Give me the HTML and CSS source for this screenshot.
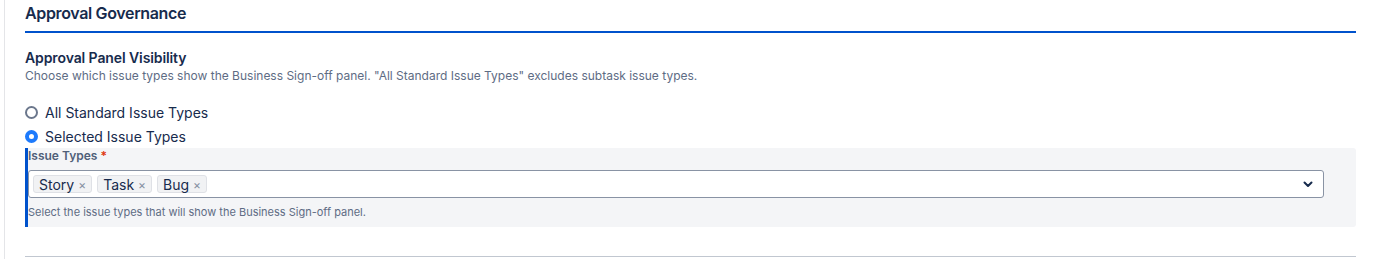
FILE: index.html
```html
<!DOCTYPE html>
<html lang="en">
<head>
    <meta charset="UTF-8">
    <meta name="viewport" content="width=device-width, initial-scale=1.0">
    <title>Approval Governance</title>
    <link rel="stylesheet" href="styles.css">
</head>
<body>

    <div class="settings-panel">
        <h2 class="section-title">Approval Governance</h2>

        <div class="setting">
            <h3 class="setting-title">Approval Panel Visibility</h3>
            <p class="setting-desc">Choose which issue types show the Business Sign-off panel. "All Standard Issue Types" excludes subtask issue types.</p>

            <div class="radio-group">
                <label class="radio-row">
                    <span class="radio"></span>
                    All Standard Issue Types
                </label>
                <label class="radio-row">
                    <span class="radio checked"></span>
                    Selected Issue Types
                </label>
            </div>

            <div class="field-box">
                <div class="field-label">Issue Types <span class="required">*</span></div>
                <div class="multi-select">
                    <div class="tags">
                        <span class="tag">Story <span class="tag-x">&times;</span></span>
                        <span class="tag">Task <span class="tag-x">&times;</span></span>
                        <span class="tag">Bug <span class="tag-x">&times;</span></span>
                    </div>
                    <svg class="chevron" width="10" height="7" viewBox="0 0 10 7">
                        <path d="M1.5 1.5 L5 5 L8.5 1.5" fill="none" stroke="#172b4d" stroke-width="2" stroke-linecap="round" stroke-linejoin="round"/>
                    </svg>
                </div>
                <div class="field-help">Select the issue types that will show the Business Sign-off panel.</div>
            </div>
        </div>

        <div class="divider"></div>
    </div>

</body>
</html>
```

FILE: styles.css
```css
/* Settings page styling */
body {
    margin: 0;
    font-family: Inter, "Noto Sans", sans-serif;
    color: #172b4d;
    background-color: #fff;
}
.settings-panel {
    margin-left: 4px;
    padding: 0 17px 2px 20px;
    border-left: 1px solid #e4e5e8;
    min-height: 257px;
}
.section-title {
    margin: 0;
    padding: 3px 0 8px;
    font-size: 16px;
    line-height: 20px;
    font-weight: 600;
    letter-spacing: -0.35px;
    border-bottom: 2px solid #0052cc;
}
.setting {
    padding-top: 15px;
}
.setting-title {
    margin: 0;
    font-size: 14px;
    line-height: 20px;
    font-weight: 600;
    letter-spacing: -0.1px;
}
.setting-desc {
    margin: 0;
    font-size: 12px;
    line-height: 16px;
    color: #5e6c84;
}
.radio-group {
    margin-top: 16px;
}
.radio-row {
    display: flex;
    align-items: center;
    gap: 7px;
    height: 24px;
    font-size: 14px;
    color: #172b4d;
}
.radio {
    width: 13px;
    height: 13px;
    box-sizing: border-box;
    border: 2px solid #6b778c;
    border-radius: 50%;
    background: #fff;
}
.radio.checked {
    border: 4px solid #1d7afc;
    background: #fff;
}
.field-box {
    background-color: #f4f5f7;
    border-left: 3px solid #0052cc;
    border-radius: 0 3px 3px 0;
    padding: 0 32px 7px 0;
}
.field-label {
    font-size: 12px;
    line-height: 16px;
    font-weight: 600;
    color: #505f79;
}
.required {
    color: #de350b;
}
.multi-select {
    margin-top: 6px;
    height: 28px;
    box-sizing: border-box;
    background: #fff;
    border: 1px solid #8993a4;
    border-radius: 3px;
    display: flex;
    align-items: center;
    justify-content: space-between;
    padding: 0 10px 0 4px;
}
.tags {
    display: flex;
    gap: 5px;
}
.tag {
    display: flex;
    align-items: center;
    gap: 4px;
    height: 18px;
    box-sizing: border-box;
    padding: 0 5px 0 5px;
    font-size: 14px;
    color: #172b4d;
    background: #f1f2f4;
    border: 1px solid #dfe1e6;
    border-radius: 3px;
}
.tag-x {
    font-size: 12px;
    color: #8590a2;
}
.field-help {
    margin-top: 6px;
    font-size: 11px;
    line-height: 16px;
    color: #5e6c84;
}
.divider {
    margin-top: 29px;
    border-top: 1px solid #c1c7d0;
}
```
